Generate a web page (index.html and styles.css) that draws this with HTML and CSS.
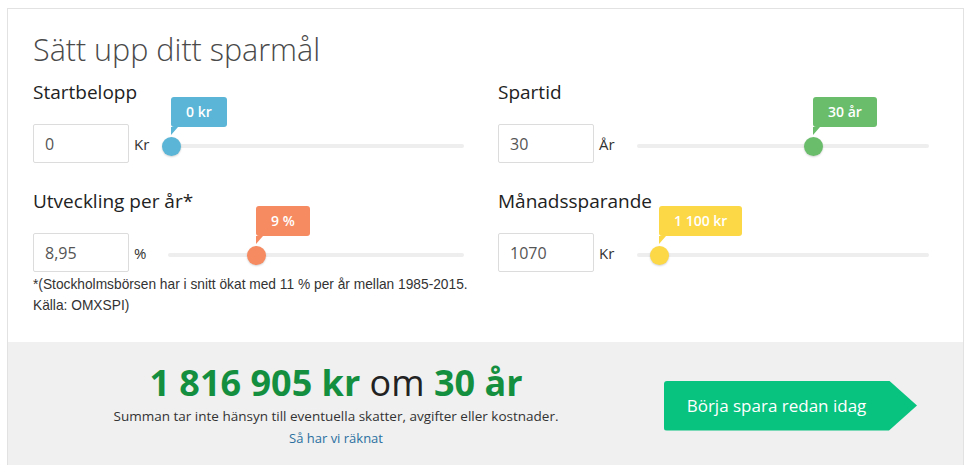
FILE: index.html
```html
<!DOCTYPE html>
<html lang="sv">
<head>
    <meta charset="UTF-8">
    <meta name="viewport" content="width=device-width, initial-scale=1.0">
    <title>Sparmål</title>
    <link rel="stylesheet" href="styles.css">
</head>
<body>
    <div class="card">
        <div class="setup">
            <h1 class="title">Sätt upp ditt sparmål</h1>
            <div class="fields">
                <div class="field">
                    <div class="field-label">Startbelopp</div>
                    <div class="field-row">
                        <input class="field-input" type="text" value="0">
                        <span class="field-unit unit-kr">Kr</span>
                        <div class="slider slider--blue">
                            <div class="slider-track"></div>
                            <div class="slider-thumb" style="left: 9px"><span class="slider-tip">0 kr</span></div>
                        </div>
                    </div>
                </div>
                <div class="field">
                    <div class="field-label">Spartid</div>
                    <div class="field-row">
                        <input class="field-input" type="text" value="30">
                        <span class="field-unit unit-wide">År</span>
                        <div class="slider slider--green">
                            <div class="slider-track"></div>
                            <div class="slider-thumb" style="left: 176px"><span class="slider-tip">30 år</span></div>
                        </div>
                    </div>
                </div>
                <div class="field">
                    <div class="field-label">Utveckling per år*</div>
                    <div class="field-row">
                        <input class="field-input" type="text" value="8,95">
                        <span class="field-unit unit-pct">%</span>
                        <div class="slider slider--orange">
                            <div class="slider-track"></div>
                            <div class="slider-thumb" style="left: 88px"><span class="slider-tip">9 %</span></div>
                        </div>
                    </div>
                    <p class="field-note">*(Stockholmsbörsen har i snitt ökat med 11 % per år mellan 1985-2015.<br>Källa: OMXSPI)</p>
                </div>
                <div class="field">
                    <div class="field-label">Månadssparande</div>
                    <div class="field-row">
                        <input class="field-input" type="text" value="1070">
                        <span class="field-unit unit-wide">Kr</span>
                        <div class="slider slider--yellow">
                            <div class="slider-track"></div>
                            <div class="slider-thumb" style="left: 22px"><span class="slider-tip">1 100 kr</span></div>
                        </div>
                    </div>
                </div>
            </div>
        </div>
        <div class="result">
            <div class="result-text">
                <div class="result-sum"><strong>1 816 905 kr</strong> om <strong>30 år</strong></div>
                <p class="result-note">Summan tar inte hänsyn till eventuella skatter, avgifter eller kostnader.</p>
                <a class="result-link" href="#">Så har vi räknat</a>
            </div>
            <a class="cta" href="#">Börja spara redan idag</a>
        </div>
    </div>
</body>
</html>
```

FILE: styles.css
```css
body {
    margin: 8px 5px 0 7px;
    background: #fff;
    font-family: "Open Sans", Lato, sans-serif;
    color: #222;
}
.card {
    border: 1px solid #e2e2e2;
    border-bottom: none;
    background: #fff;
}
.setup {
    padding: 21px 34px 26px 25px;
}
.title {
    margin: 0 0 12px;
    font-size: 30.5px;
    line-height: 38px;
    font-weight: 300;
    color: #4a4a4a;
}
.fields {
    display: grid;
    grid-template-columns: minmax(0, 1fr) minmax(0, 1fr);
    column-gap: 34px;
    row-gap: 26px;
    align-items: start;
}
.field-label {
    font-size: 19px;
    line-height: 24px;
    color: #222;
}
.field-row {
    display: flex;
    align-items: center;
    margin-top: 20px;
}
.field-input {
    width: 96px;
    height: 39px;
    box-sizing: border-box;
    padding: 0 11px;
    border: 1px solid #dcdcdc;
    border-radius: 2px;
    font-family: inherit;
    font-size: 16px;
    color: #555;
    outline: none;
}
.field-unit {
    margin-left: 5px;
    font-size: 15px;
    color: #333;
}
.unit-kr { width: 28px; }
.unit-pct { width: 34px; }
.unit-wide { width: 38px; }
.slider {
    flex: 1;
    position: relative;
    height: 20px;
    margin-top: 5px;
}
.slider--blue { --tone: #5ab5d6; }
.slider--green { --tone: #6abd6b; }
.slider--orange { --tone: #f68a60; }
.slider--yellow { --tone: #fcd846; }
.slider-track {
    position: absolute;
    left: 0;
    right: 0;
    top: 8px;
    height: 4px;
    border-radius: 2px;
    background: #eee;
}
.slider-thumb {
    position: absolute;
    top: 0.5px;
    width: 19px;
    height: 19px;
    margin-left: -9.5px;
    border-radius: 50%;
    background: var(--tone);
    box-shadow: 0 1px 2px rgba(0, 0, 0, 0.18);
}
.slider-tip {
    position: absolute;
    left: 9.5px;
    bottom: 29px;
    height: 30px;
    padding: 0 15px;
    line-height: 30px;
    border-radius: 3px;
    background: var(--tone);
    color: #fff;
    font-size: 14px;
    font-weight: 600;
    white-space: nowrap;
}
.slider-tip::after {
    content: "";
    position: absolute;
    left: 0;
    top: 100%;
    border-left: 7px solid var(--tone);
    border-bottom: 8px solid transparent;
}
.field-note {
    margin: 2px 0 0;
    font-family: "Liberation Sans", Arial, sans-serif;
    font-size: 13.75px;
    line-height: 21px;
    color: #333;
    white-space: nowrap;
}
.result {
    display: flex;
    align-items: center;
    background: #f0f0f0;
    padding: 21px 46px 20px 0;
}
.result-text {
    flex: 1;
    text-align: center;
}
.result-sum {
    font-size: 36px;
    line-height: 40px;
    color: #222;
}
.result-sum strong {
    color: #138f3f;
    font-weight: bold;
}
.result-note {
    margin: 3px 0 0;
    font-size: 13.5px;
    line-height: 20px;
    color: #333;
}
.result-link {
    font-size: 13px;
    line-height: 20px;
    color: #2a6f9f;
    text-decoration: none;
}
.cta {
    width: 253px;
    height: 50px;
    box-sizing: border-box;
    padding-right: 28px;
    line-height: 50px;
    text-align: center;
    border-radius: 3px;
    clip-path: polygon(0 0, 225px 0, 253px 25px, 225px 50px, 0 50px);
    background: #08c280;
    color: #fff;
    font-size: 17px;
    text-decoration: none;
}
```
